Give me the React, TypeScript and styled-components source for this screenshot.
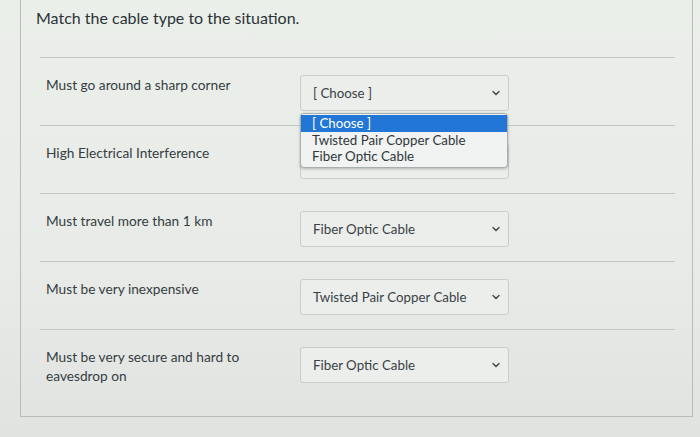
import React from 'react';
import styled, { createGlobalStyle } from 'styled-components';
import { ChevronDown } from 'lucide-react';

const GlobalStyle = createGlobalStyle`
    html, body {
        margin: 0;
        padding: 0;
        background: #e4e7e4;
        font-family: Lato, "Open Sans", "Liberation Sans", sans-serif;
        color: #2f3a40;
    }
`;

const Page = styled.div`
    width: 700px;
    height: 437px;
    overflow: hidden;
    background: linear-gradient(180deg, #ebefea 0%, #e8ebe7 60%, #e1e3e0 100%);
`;

const QuestionBox = styled.div`
    margin-left: 20px;
    width: 673px;
    box-sizing: border-box;
    border: 1px solid #b7bcb9;
    border-top: none;
    padding: 6px 17px 17px 15px;
`;

const Title = styled.div`
    font-size: 16px;
    line-height: 24px;
    color: #2b3338;
    margin-bottom: 27px;
`;

const Answers = styled.div`
    margin-left: 4px;
`;

const Row = styled.div`
    display: flex;
    align-items: flex-start;
    border-top: 1px solid #c3c8c5;
    padding: 17px 0 14px;
`;

const Label = styled.div`
    width: 250px;
    padding-left: 6px;
    box-sizing: border-box;
    margin-right: 10px;
    font-size: 13.7px;
    line-height: 19px;
    color: #353d42;
`;

const SelectWrap = styled.div`
    position: relative;
`;

const Select = styled.div`
    width: 209px;
    height: 36px;
    box-sizing: border-box;
    border: 1px solid #c9cecb;
    border-radius: 3px;
    background: #eceeec;
    display: flex;
    align-items: center;
    justify-content: space-between;
    padding: 0 6px 0 12px;
    font-size: 13.3px;
    color: #3a4145;
`;

const Menu = styled.ul`
    position: absolute;
    top: 38px;
    left: 0;
    width: 208px;
    box-sizing: border-box;
    margin: 0;
    padding: 1px 0 2px;
    list-style: none;
    background: #f1f2f2;
    border: 1px solid #a9aeae;
    border-radius: 4px;
    box-shadow: 0 1px 3px rgba(0, 0, 0, 0.25);
    z-index: 2;
`;

const Option = styled.li<{ $active?: boolean }>`
    font-size: 13.3px;
    line-height: 16.5px;
    padding: 0 11px;
    color: ${p => (p.$active ? '#ffffff' : '#30383c')};
    background: ${p => (p.$active ? '#2277d6' : 'transparent')};
`;

const rows = [
    { label: 'Must go around a sharp corner', value: '[ Choose ]', open: true },
    { label: 'High Electrical Interference', value: '[ Choose ]' },
    { label: 'Must travel more than 1 km', value: 'Fiber Optic Cable' },
    { label: 'Must be very inexpensive', value: 'Twisted Pair Copper Cable' },
    { label: 'Must be very secure and hard to eavesdrop on', value: 'Fiber Optic Cable' },
];

const options = ['[ Choose ]', 'Twisted Pair Copper Cable', 'Fiber Optic Cable'];

const App: React.FC = () => {
    return (
        <Page>
            <GlobalStyle />
            <QuestionBox>
                <Title>Match the cable type to the situation.</Title>
                <Answers>
                    {rows.map(r => (
                        <Row key={r.label}>
                            <Label>{r.label}</Label>
                            <SelectWrap>
                                <Select>
                                    <span>{r.value}</span>
                                    <ChevronDown size={12} strokeWidth={2.6} color="#3a4145" />
                                </Select>
                                {r.open && (
                                    <Menu>
                                        {options.map((o, i) => (
                                            <Option key={o} $active={i === 0}>{o}</Option>
                                        ))}
                                    </Menu>
                                )}
                            </SelectWrap>
                        </Row>
                    ))}
                </Answers>
            </QuestionBox>
        </Page>
    );
}

export default App;
